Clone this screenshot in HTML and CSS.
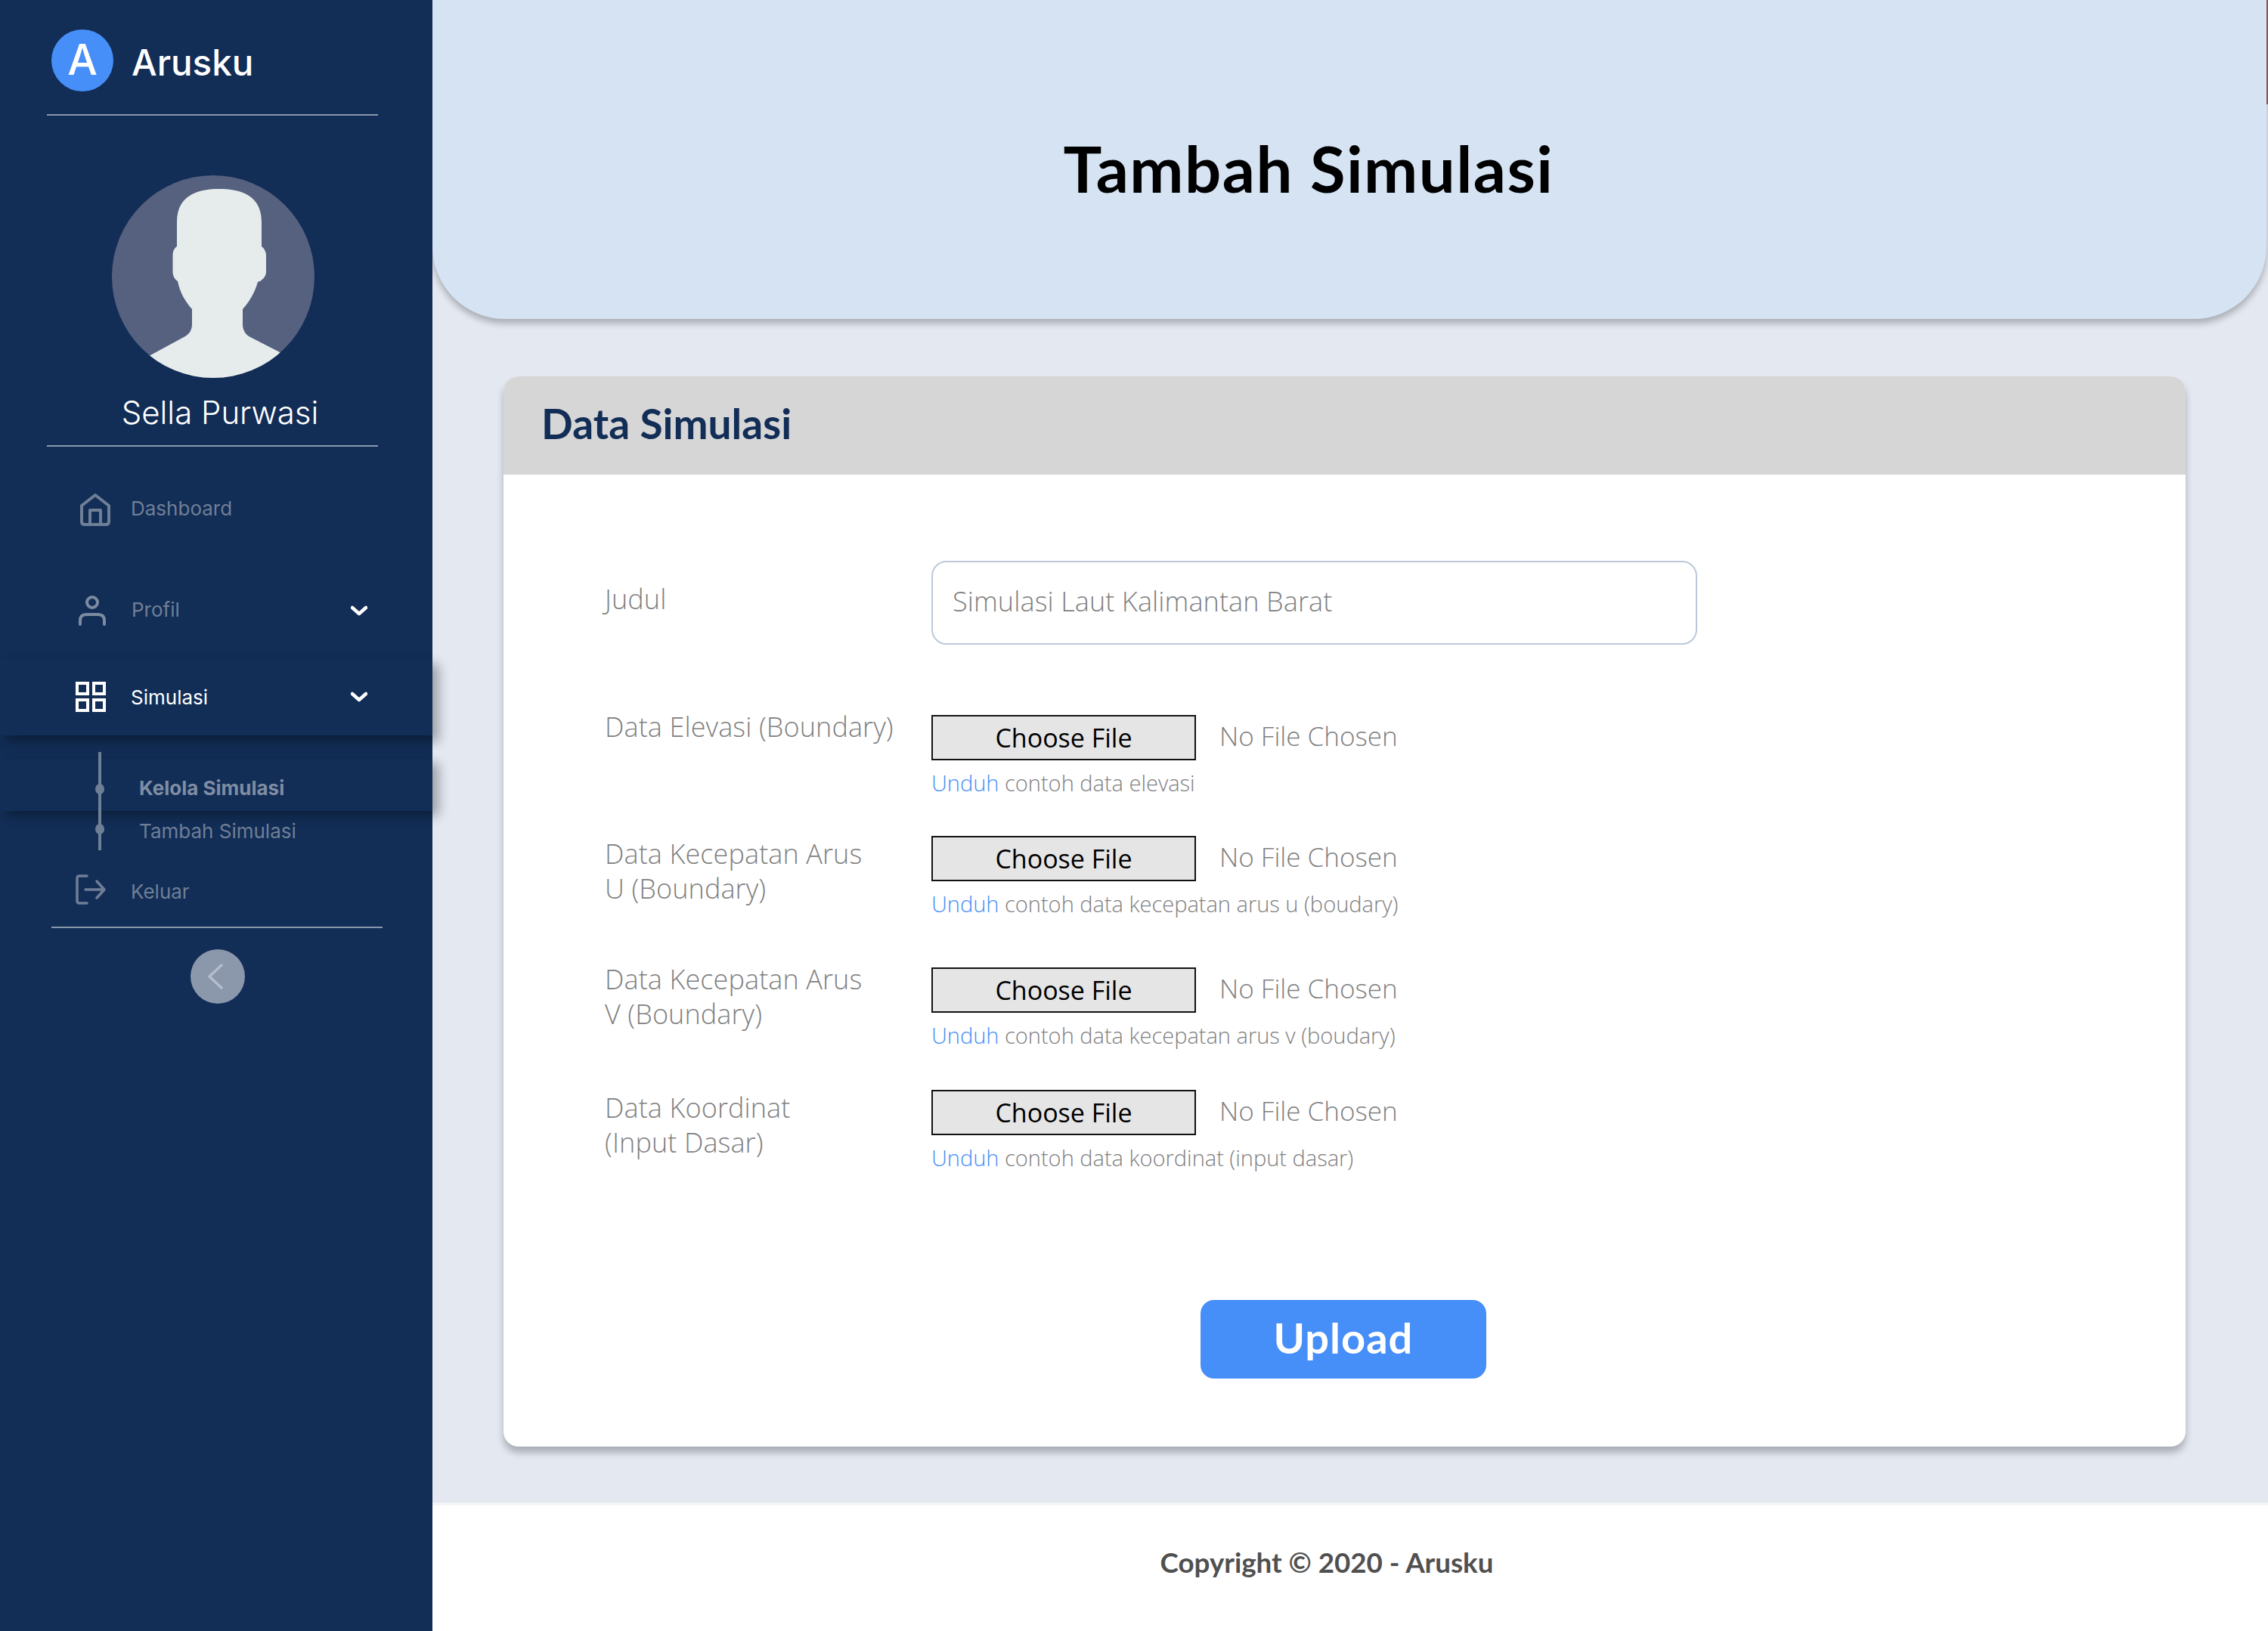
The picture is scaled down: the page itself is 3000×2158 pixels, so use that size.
FILE: index.html
```html
<!DOCTYPE html>
<html lang="id">
<head>
<meta charset="utf-8">
<title>Tambah Simulasi - Arusku</title>
<link rel="stylesheet" href="styles.css">
</head>
<body>
<div class="app">
  <aside class="sidebar">
    <div class="brand">
      <span class="brand-mark">A</span>
      <span class="brand-name">Arusku</span>
    </div>
    <div class="rule"></div>
    <div class="avatar">
      <svg viewBox="0 0 268 268" width="268" height="268"><path fill="#e6ecec" d="M86 62C86 30 108 18 142 18C176 18 198 30 198 62V94C202 97 204 102 204 106V128C204 134 198 140 193 141C189 155 182 167 173 177V197C173 205 177 211 183 214L222 234L262 256V268H10V260L51 238L97 213C102 210 106 205 106 197V177C97 167 90 155 87 140C83 138 80.5 132 80.5 128V106C80.5 100 83 96 86 94Z"/></svg>
    </div>
    <div class="user-name">Sella Purwasi</div>
    <div class="rule"></div>
    <nav class="menu">
      <a class="item item-dash">
        <svg class="ico ico-home" viewBox="0 0 40 44" width="40" height="44" fill="none" stroke="#6f7f96" stroke-width="4" stroke-linejoin="round"><path d="M2 17L20 3L38 17V38Q38 42 34 42H6Q2 42 2 38Z"/><path d="M13 42V23H27V42"/></svg>
        <span>Dashboard</span>
      </a>
      <a class="item item-profil">
        <svg class="ico ico-user" viewBox="0 0 36 40" width="36" height="40" fill="none" stroke="#7d8ba0" stroke-width="4" stroke-linecap="round"><circle cx="18" cy="9" r="7"/><path d="M2 38V33Q2 25 10 25H26Q34 25 34 33V38"/></svg>
        <span>Profil</span>
        <svg class="chev" viewBox="0 0 22 14" width="22" height="14" fill="none" stroke="#fff" stroke-width="4.5" stroke-linecap="round" stroke-linejoin="round"><path d="M2 3L11 11L20 3"/></svg>
      </a>
      <a class="item item-sim">
        <svg class="ico" viewBox="0 0 40 40" width="40" height="40" fill="none" stroke="#fff" stroke-width="4"><rect x="2" y="2" width="14" height="14"/><rect x="24" y="2" width="14" height="14"/><rect x="2" y="24" width="14" height="14"/><rect x="24" y="24" width="14" height="14"/></svg>
        <span>Simulasi</span>
        <svg class="chev" viewBox="0 0 22 14" width="22" height="14" fill="none" stroke="#fff" stroke-width="4.5" stroke-linecap="round" stroke-linejoin="round"><path d="M2 3L11 11L20 3"/></svg>
      </a>
      <div class="sub">
        <a class="sub-item sub-active">Kelola Simulasi</a>
        <a class="sub-item sub-plain">Tambah Simulasi</a>
        <div class="track"><i class="dot dot-a"></i><i class="dot dot-b"></i></div>
      </div>
      <a class="item item-out">
        <svg class="ico" viewBox="0 0 40 40" width="40" height="40" fill="none" stroke="#6f7f96" stroke-width="3.5" stroke-linecap="round" stroke-linejoin="round"><path d="M15 2H5Q2 2 2 5V35Q2 38 5 38H15"/><path d="M13 20H38M28 9L38 20L28 31"/></svg>
        <span>Keluar</span>
      </a>
    </nav>
    <div class="rule rule-end"></div>
    <button class="collapse" type="button" aria-label="Tutup menu">
      <svg class="collapse-ico" viewBox="0 0 20 34" width="20" height="34" fill="none" stroke="#b4bdca" stroke-width="3.5" stroke-linecap="round" stroke-linejoin="round"><path d="M18 2L2 17L18 32"/></svg>
    </button>
  </aside>

  <main class="main">
    <header class="hero"><h1>Tambah Simulasi</h1></header>
    <section class="card">
      <h2 class="card-head">Data Simulasi</h2>
      <form class="card-body">
        <div class="row row-title">
          <label class="lab lab-title">Judul</label>
          <input class="text-input" type="text" value="Simulasi Laut Kalimantan Barat">
        </div>
        <div class="row row-a">
          <label class="lab lab-a">Data Elevasi (Boundary)</label>
          <div class="ctl">
            <div class="file"><button class="file-btn" type="button">Choose File</button><span class="file-none">No File Chosen</span></div>
            <p class="hint"><a class="dl">Unduh</a> contoh data elevasi</p>
          </div>
        </div>
        <div class="row row-b">
          <label class="lab lab-b">Data Kecepatan Arus<br>U (Boundary)</label>
          <div class="ctl">
            <div class="file"><button class="file-btn" type="button">Choose File</button><span class="file-none">No File Chosen</span></div>
            <p class="hint"><a class="dl">Unduh</a> contoh data kecepatan arus u (boudary)</p>
          </div>
        </div>
        <div class="row row-c">
          <label class="lab lab-a">Data Kecepatan Arus<br>V (Boundary)</label>
          <div class="ctl">
            <div class="file"><button class="file-btn" type="button">Choose File</button><span class="file-none">No File Chosen</span></div>
            <p class="hint"><a class="dl">Unduh</a> contoh data kecepatan arus v (boudary)</p>
          </div>
        </div>
        <div class="row row-d">
          <label class="lab lab-b">Data Koordinat<br>(Input Dasar)</label>
          <div class="ctl">
            <div class="file"><button class="file-btn" type="button">Choose File</button><span class="file-none">No File Chosen</span></div>
            <p class="hint"><a class="dl">Unduh</a> contoh data koordinat (input dasar)</p>
          </div>
        </div>
        <div class="actions"><button class="upload" type="button">Upload</button></div>
      </form>
    </section>
    <footer class="foot">Copyright © 2020 - Arusku</footer>
  </main>
  <div class="edge"></div>
</div>
</body>
</html>
```

FILE: styles.css
```css
* { box-sizing: border-box; }
html, body { margin: 0; padding: 0; }
body { font-family: "Open Sans", "Lato", sans-serif; background: #e3e8f1; }
.app { display: flex; width: 3000px; height: 2158px; overflow: hidden; position: relative; }

.sidebar { width: 572px; flex: none; background: #122d56; position: relative; z-index: 1; font-family: "Inter", sans-serif; display: flex; flex-direction: column; }
.brand { display: flex; align-items: center; height: 82px; margin: 39px 0 0 68px; gap: 24px; }
.brand-mark { width: 82px; height: 82px; border-radius: 50%; background: #468ef8; color: #fff; font-size: 56px; font-weight: 500; display: flex; align-items: center; justify-content: center; padding-bottom: 2px; }
.brand-name { color: #fff; font-size: 47.5px; font-weight: 500; position: relative; top: 2px; }
.rule { height: 2px; width: 438px; margin-left: 62px; background: #8a98ad; flex: none; }
.brand + .rule { margin-top: 30px; }
.avatar { width: 268px; height: 268px; border-radius: 50%; background: #56617f; overflow: hidden; margin: 79px 0 0 148px; flex: none; }
.avatar svg { display: block; }
.user-name { color: #fff; font-size: 42px; font-weight: 300; text-align: center; margin: 22px 0 19px 10px; height: 48px; line-height: 48px; width: 562px; }

.menu { display: flex; flex-direction: column; }
.item { display: flex; align-items: center; height: 102px; flex: none; font-size: 26px; font-weight: 400; color: #6f7f96; position: relative; }
.item-dash { margin-top: 32px; padding-left: 106px; gap: 27px; }
.item-profil { margin-top: 32px; padding-left: 104px; gap: 34px; }
.item-sim { margin-top: 12px; padding-left: 100px; gap: 33px; color: #fff; background: #122d56; box-shadow: 8px 8px 14px rgba(0,0,0,.32); z-index: 1; }
.chev { position: absolute; left: 464px; top: 44px; }
.item-dash span, .item-profil span { position: relative; top: -2px; }
.sub { position: relative; height: 152px; flex: none; }
.sub-item { display: block; font-size: 26px; padding-left: 184px; }
.sub-active { position: absolute; left: 0; top: 31px; width: 572px; height: 69px; padding-top: 21px; line-height: 36px; color: #7f8da3; font-weight: 700; background: #122d56; box-shadow: 8px 6px 14px rgba(0,0,0,.32); }
.sub-plain { position: absolute; left: 0; top: 109px; line-height: 36px; color: #6f7f96; font-weight: 400; }
.track { position: absolute; left: 130px; top: 22px; width: 4px; height: 130px; background: #6f7f96; }
.dot { position: absolute; left: -4px; width: 12px; height: 14px; border-radius: 50%; background: #6f7f96; }
.dot-a { top: 42px; }
.dot-b { top: 95px; }
.item-out { margin-top: 22px; height: 60px; padding-left: 100px; gap: 33px; }
.item-out span { position: relative; top: 2px; }
.rule-end { margin: 19px 0 0 68px; }
.collapse { width: 72px; height: 72px; border: 0; border-radius: 50%; background: #8b97ab; margin: 28px 0 0 252px; padding: 0 6px 0 0; display: flex; align-items: center; justify-content: center; flex: none; }

.main { flex: 1; min-width: 0; display: flex; flex-direction: column; }
.hero { height: 422px; margin-right: 2px; background: #d5e3f3; border-radius: 0 0 96px 96px; box-shadow: 0 6px 8px rgba(0,0,0,.25); display: flex; align-items: center; justify-content: center; padding: 22px 108px 0 0; flex: none; }
.hero h1 { margin: 0; font-family: "Lato", sans-serif; font-size: 85px; font-weight: 700; color: #000; letter-spacing: 1.5px; }
.card { margin: 76px 0 0 94px; width: 2225px; height: 1416px; flex: none; background: #fff; border-radius: 20px; box-shadow: 0 8px 10px rgba(0,0,0,.25); display: flex; flex-direction: column; }
.card-head { margin: 0; height: 130px; background: #d6d6d6; border-radius: 20px 20px 0 0; padding: 0 0 6px 50px; display: flex; align-items: center; font-family: "Lato", sans-serif; font-size: 55px; font-weight: 700; color: #122d56; flex: none; }
.card-body { padding: 114px 0 0 134px; display: flex; flex-direction: column; }
.row { display: flex; align-items: flex-start; }
.lab { width: 432px; flex: none; font-size: 36px; line-height: 46px; color: #808080; font-weight: 300; letter-spacing: 0.1px; }
.lab-title { margin-top: 28px; }
.lab-a { margin-top: -7px; }
.lab-b { margin-top: 1px; }
.row-a { margin-top: 93px; }
.row-b { margin-top: 52px; }
.row-c { margin-top: 66px; }
.row-d { margin-top: 54px; }
.text-input { width: 1013px; height: 111px; border: 2px solid #bcc8da; border-radius: 20px; padding: 0 0 4px 26px; font: 300 36px "Open Sans", sans-serif; letter-spacing: 0.1px; color: #808080; background: #fff; }
.file { display: flex; align-items: center; gap: 31px; }
.file-btn { width: 350px; height: 60px; background: #e5e5e5; border: 2px solid #111; border-radius: 0; font: 400 34px "Open Sans", sans-serif; color: #000; padding: 0; }
.file-none { font-size: 35px; font-weight: 300; color: #808080; position: relative; top: -3px; }
.hint { margin: 12px 0 0; font-size: 29px; line-height: 36px; font-weight: 300; color: #808080; }
.dl { color: #468ef8; font-weight: 300; }
.actions { margin-top: 170px; display: flex; padding-left: 788px; }
.upload { width: 378px; height: 104px; border: 0; border-radius: 18px; background: #468ef8; color: #fff; font: 700 56px "Lato", sans-serif; letter-spacing: 1px; padding: 0 0 6px; }
.foot { margin-top: 74px; flex: 1; background: #fff; border-top: 4px solid #f4f5f7; display: flex; align-items: center; justify-content: center; font-family: "Lato", sans-serif; font-size: 36.7px; font-weight: 700; color: #505050; padding: 0 62px 16px 0; }
.edge { position: absolute; right: 0; top: 0; width: 2px; height: 138px; background: #84565a; }
```
